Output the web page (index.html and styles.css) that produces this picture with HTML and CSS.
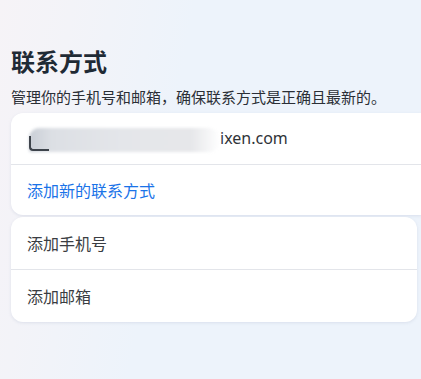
FILE: index.html
```html
<!DOCTYPE html>
<html lang="zh-CN">
<head>
<meta charset="utf-8">
<title>联系方式</title>
<link rel="stylesheet" href="styles.css">
</head>
<body>
<main class="page">
  <h1 class="title">联系方式</h1>
  <p class="subtitle">管理你的手机号和邮箱，确保联系方式是正确且最新的。</p>
  <section class="card card-wide">
    <div class="row email-row">
      <div class="masked">
        <span class="masked-icon"></span>
        <span class="masked-blur"></span>
      </div>
      <span class="email-text">ixen.com</span>
    </div>
    <div class="row link-row">
      <span class="link">添加新的联系方式</span>
    </div>
  </section>
  <section class="card card-narrow">
    <div class="row item-row">添加手机号</div>
    <div class="row item-row">添加邮箱</div>
  </section>
</main>
</body>
</html>
```
FILE: styles.css
```css
html, body {
  margin: 0;
  padding: 0;
  height: 100%;
  overflow: hidden;
}
body {
  background: linear-gradient(100deg, #f6f3f7 0%, #f3f3f8 15%, #edf3fb 40%, #edf3fb 100%);
  font-family: "Noto Sans", "Noto Sans CJK SC", sans-serif;
  color: #333;
}
.page {
  padding: 46px 0 0 11px;
}
.title {
  margin: 0;
  font-size: 24px;
  line-height: 32px;
  font-weight: 700;
  color: #1f2a35;
}
.subtitle {
  margin: 9px 0 0;
  font-size: 15px;
  line-height: 20px;
  color: #2b2f36;
}
.card {
  background: #fff;
  border-radius: 12px;
  box-shadow: 0 1px 3px rgba(180, 190, 210, 0.35);
}
.card-wide {
  margin-top: 6px;
  width: 410px;
  border-radius: 12px 0 0 12px;
}
.card-narrow {
  margin-top: 2px;
  width: 406px;
}
.row {
  display: flex;
  align-items: center;
}
.row + .row {
  border-top: 1px solid #e3e5ea;
}
.email-row {
  height: 51px;
  padding-left: 18px;
}
.masked {
  position: relative;
  width: 191px;
  height: 24px;
  margin-top: 2px;
}
.masked-blur {
  position: absolute;
  inset: 0;
  background: linear-gradient(90deg, #c9ced6 0%, #dcdfe4 12%, #e4e6ea 50%, #e6e7ea 85%, #ffffff 100%);
  border-radius: 10px 12px 12px 2px;
  filter: blur(1.5px);
}
.masked-icon {
  position: absolute;
  left: 0;
  top: 8px;
  width: 20px;
  height: 15px;
  border-left: 2px solid #2d333b;
  border-bottom: 2px solid #2d333b;
  border-radius: 0 0 0 4px;
  z-index: 1;
  box-sizing: border-box;
  opacity: 0.9;
}
.email-text {
  font-size: 16px;
  color: #2f3338;
  margin-top: -2px;
}
.link-row {
  height: 50px;
  padding-left: 16px;
}
.link {
  font-size: 16px;
  color: #1a73e8;
}
.item-row {
  height: 52px;
  padding-left: 16px;
  font-size: 16px;
  color: #3a3d42;
}
```
